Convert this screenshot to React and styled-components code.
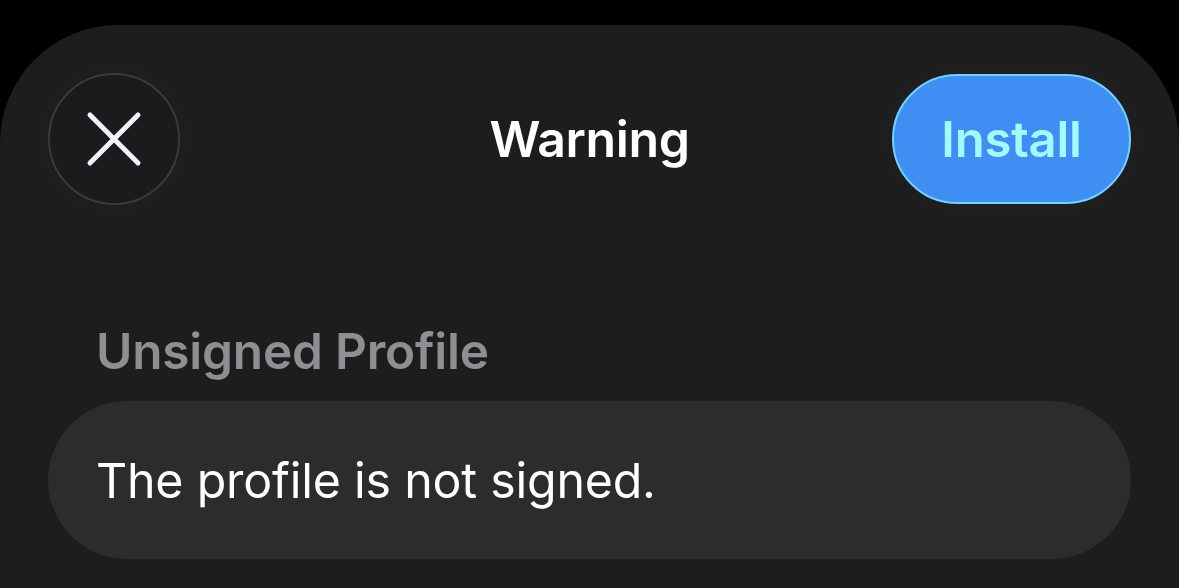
import React from "react";
import styled, { createGlobalStyle } from "styled-components";

const GlobalStyle = createGlobalStyle`
  html, body {
    margin: 0;
    padding: 0;
    background: #000;
    font-family: Inter, "Noto Sans", sans-serif;
    -webkit-font-smoothing: antialiased;
  }
`;

const Page = styled.div`
  width: 1179px;
  height: 588px;
  overflow: hidden;
  padding-top: 25px;
  box-sizing: border-box;
`;

const Sheet = styled.div`
  height: 563px;
  background: #1d1d1d;
  border-radius: 118px 118px 0 0;
  padding: 48px 48px 0;
  box-sizing: border-box;
`;

const Header = styled.header`
  display: grid;
  grid-template-columns: 239px 1fr 239px;
  align-items: center;
  height: 132px;
`;

const CloseButton = styled.button`
  width: 132px;
  height: 132px;
  border-radius: 50%;
  border: 2px solid #3a3a3c;
  background: #1b1b1d;
  box-shadow: 0 0 36px 12px rgba(255, 255, 255, 0.015);
  display: flex;
  align-items: center;
  justify-content: center;
  padding: 0;
  cursor: pointer;
`;

const Title = styled.h1`
  margin: 0;
  text-align: center;
  color: #fff;
  font-size: 50px;
  font-weight: 600;
  letter-spacing: -0.4px;
`;

const InstallButton = styled.button`
  width: 239px;
  height: 130px;
  border-radius: 65px;
  border: 2px solid #6fd3ff;
  background: #3e8ef3;
  color: #a2faff;
  font-family: Inter, "Noto Sans", sans-serif;
  font-size: 49px;
  font-weight: 600;
  letter-spacing: -0.2px;
  cursor: pointer;
  box-shadow: 0 0 36px 12px rgba(255, 255, 255, 0.015);
`;

const SectionLabel = styled.h2`
  margin: 116px 0 0 48px;
  color: #8e8e93;
  font-size: 49.5px;
  font-weight: 600;
  line-height: 60px;
  letter-spacing: -0.2px;
`;

const Row = styled.div`
  margin-top: 20px;
  height: 158px;
  border-radius: 79px;
  background: #2c2c2c;
  display: flex;
  align-items: center;
  padding-left: 48px;
`;

const RowText = styled.span`
  color: #fff;
  font-size: 48.3px;
  font-weight: 400;
  letter-spacing: -0.2px;
`;

const XIcon = () => (
  <svg width="56" height="56" viewBox="0 0 56 56" fill="none">
    <path
      d="M4 4 L52 52 M52 4 L4 52"
      stroke="#f2f2f7"
      strokeWidth="5"
      strokeLinecap="round"
    />
  </svg>
);

export default function App() {
  return (
    <>
      <GlobalStyle />
      <Page>
        <Sheet>
          <Header>
            <CloseButton aria-label="Close">
              <XIcon />
            </CloseButton>
            <Title>Warning</Title>
            <InstallButton>Install</InstallButton>
          </Header>
          <SectionLabel>Unsigned Profile</SectionLabel>
          <Row>
            <RowText>The profile is not signed.</RowText>
          </Row>
        </Sheet>
      </Page>
    </>
  );
}
